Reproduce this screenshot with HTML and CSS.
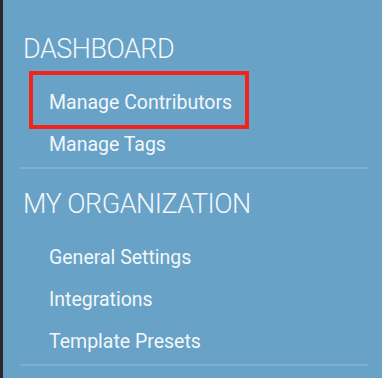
FILE: index.html
```html
<!DOCTYPE html>
<html lang="en">
<head>
    <meta charset="UTF-8">
    <meta name="viewport" content="width=device-width, initial-scale=1.0">
    <title>Settings Menu</title>
    <link rel="stylesheet" href="styles.css">
</head>
<body>

    <!-- Dark edge on the left -->
    <div class="rail"></div>

    <!-- Side Menu -->
    <nav class="sidebar">
        <div class="section">
            <h2 class="section-title">DASHBOARD</h2>
            <ul class="menu">
                <li><a href="#" class="menu-link active">Manage Contributors</a></li>
                <li><a href="#" class="menu-link">Manage Tags</a></li>
            </ul>
        </div>

        <div class="section">
            <h2 class="section-title">MY ORGANIZATION</h2>
            <ul class="menu">
                <li><a href="#" class="menu-link">General Settings</a></li>
                <li><a href="#" class="menu-link">Integrations</a></li>
                <li><a href="#" class="menu-link">Template Presets</a></li>
            </ul>
        </div>
    </nav>

</body>
</html>
```

FILE: styles.css
```css
body {
    font-family: Roboto, "Open Sans", sans-serif;
    margin: 0;
    padding: 0;
    height: 100vh;
    overflow: hidden;
    display: flex;
    background: #68a2c7;
    color: #f2f7fb;
}

.rail {
    width: 3px;
    background: #2a2a2b;
    flex-shrink: 0;
}

/* Side Menu */
.sidebar {
    flex: 1;
    padding: 14px 14px 0 17px;
}

.section {
    padding-top: 18px;
    padding-bottom: 1px;
    border-bottom: 2px solid rgba(255, 255, 255, 0.15);
}

.section-title {
    margin: 0 0 16px 3px;
    font-size: 27px;
    font-weight: 300;
    letter-spacing: -0.5px;
    line-height: 34px;
}

.menu {
    list-style: none;
    margin: 0;
    padding: 0 0 0 13px;
}

.menu-link {
    display: inline-block;
    padding: 0 13px 0 16px;
    font-size: 19.5px;
    line-height: 42px;
    color: #f2f7fb;
    text-decoration: none;
}

/* Highlighted item */
.menu-link.active {
    padding-top: 7px;
    padding-bottom: 1px;
    margin: -7px 0 -1px;
    outline: 4px solid #f2231b;
}
```
